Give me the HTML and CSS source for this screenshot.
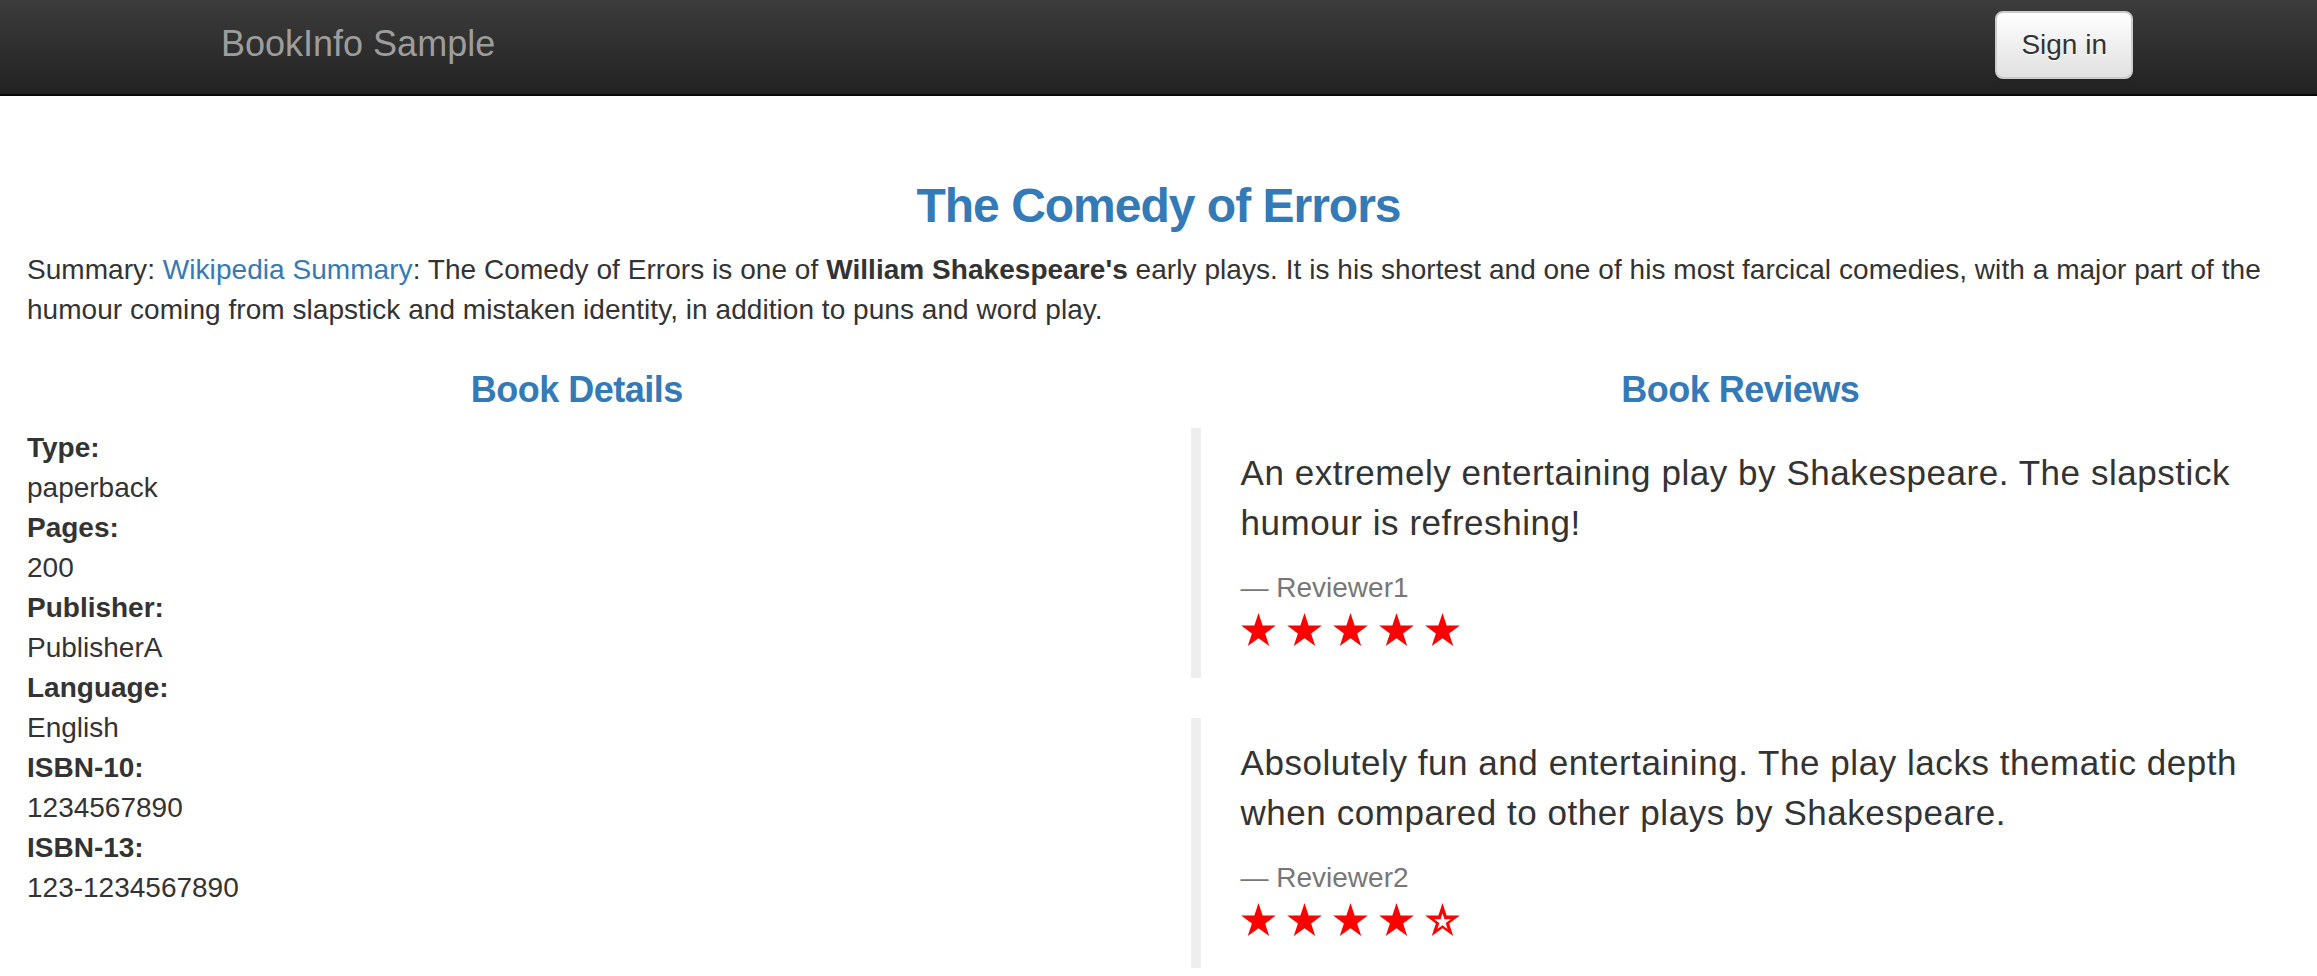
FILE: index.html
```html
<!DOCTYPE html>
<html lang="en">
<head>
<meta charset="utf-8">
<title>Simple Bookstore App</title>
<link rel="stylesheet" href="styles.css">
</head>
<body>
<nav class="navbar">
  <a class="brand" href="#">BookInfo Sample</a>
  <button class="btn-signin" type="button">Sign in</button>
</nav>

<main class="content">
  <h3 class="title">The Comedy of Errors</h3>
  <p class="summary">Summary: <a href="#">Wikipedia Summary</a>: The Comedy of Errors is one of <b>William Shakespeare's</b> early plays. It is his shortest and one of his most farcical comedies, with a major part of the humour coming from slapstick and mistaken identity, in addition to puns and word play.</p>

  <div class="columns">
    <section class="col">
      <h4 class="col-title">Book Details</h4>
      <dl class="details">
        <dt>Type:</dt><dd>paperback</dd>
        <dt>Pages:</dt><dd>200</dd>
        <dt>Publisher:</dt><dd>PublisherA</dd>
        <dt>Language:</dt><dd>English</dd>
        <dt>ISBN-10:</dt><dd>1234567890</dd>
        <dt>ISBN-13:</dt><dd>123-1234567890</dd>
      </dl>
    </section>

    <section class="col">
      <h4 class="col-title">Book Reviews</h4>
      <blockquote class="review">
        <p>An extremely entertaining play by Shakespeare. The slapstick humour is refreshing!</p>
        <small>Reviewer1</small>
        <div class="stars">
          <svg class="star" viewBox="2.45 0 95.1 90.45"><polygon points="50,0 61.23,34.55 97.55,34.55 68.16,55.9 79.39,90.45 50,69.1 20.61,90.45 31.84,55.9 2.45,34.55 38.77,34.55"/></svg>
          <svg class="star" viewBox="2.45 0 95.1 90.45"><polygon points="50,0 61.23,34.55 97.55,34.55 68.16,55.9 79.39,90.45 50,69.1 20.61,90.45 31.84,55.9 2.45,34.55 38.77,34.55"/></svg>
          <svg class="star" viewBox="2.45 0 95.1 90.45"><polygon points="50,0 61.23,34.55 97.55,34.55 68.16,55.9 79.39,90.45 50,69.1 20.61,90.45 31.84,55.9 2.45,34.55 38.77,34.55"/></svg>
          <svg class="star" viewBox="2.45 0 95.1 90.45"><polygon points="50,0 61.23,34.55 97.55,34.55 68.16,55.9 79.39,90.45 50,69.1 20.61,90.45 31.84,55.9 2.45,34.55 38.77,34.55"/></svg>
          <svg class="star" viewBox="2.45 0 95.1 90.45"><polygon points="50,0 61.23,34.55 97.55,34.55 68.16,55.9 79.39,90.45 50,69.1 20.61,90.45 31.84,55.9 2.45,34.55 38.77,34.55"/></svg>
        </div>
      </blockquote>
      <blockquote class="review">
        <p>Absolutely fun and entertaining. The play lacks thematic depth when compared to other plays by Shakespeare.</p>
        <small>Reviewer2</small>
        <div class="stars">
          <svg class="star" viewBox="2.45 0 95.1 90.45"><polygon points="50,0 61.23,34.55 97.55,34.55 68.16,55.9 79.39,90.45 50,69.1 20.61,90.45 31.84,55.9 2.45,34.55 38.77,34.55"/></svg>
          <svg class="star" viewBox="2.45 0 95.1 90.45"><polygon points="50,0 61.23,34.55 97.55,34.55 68.16,55.9 79.39,90.45 50,69.1 20.61,90.45 31.84,55.9 2.45,34.55 38.77,34.55"/></svg>
          <svg class="star" viewBox="2.45 0 95.1 90.45"><polygon points="50,0 61.23,34.55 97.55,34.55 68.16,55.9 79.39,90.45 50,69.1 20.61,90.45 31.84,55.9 2.45,34.55 38.77,34.55"/></svg>
          <svg class="star" viewBox="2.45 0 95.1 90.45"><polygon points="50,0 61.23,34.55 97.55,34.55 68.16,55.9 79.39,90.45 50,69.1 20.61,90.45 31.84,55.9 2.45,34.55 38.77,34.55"/></svg>
          <svg class="star star-empty" viewBox="2.45 0 95.1 90.45"><polygon points="50,0 61.23,34.55 97.55,34.55 68.16,55.9 79.39,90.45 50,69.1 20.61,90.45 31.84,55.9 2.45,34.55 38.77,34.55"/><polygon class="hole" transform="translate(50 52) scale(0.48) translate(-50 -50)" points="50,0 61.23,34.55 97.55,34.55 68.16,55.9 79.39,90.45 50,69.1 20.61,90.45 31.84,55.9 2.45,34.55 38.77,34.55"/></svg>
        </div>
      </blockquote>
    </section>
  </div>
</main>
</body>
</html>
```

FILE: styles.css
```css
* {
  box-sizing: border-box;
}

html, body {
  margin: 0;
  padding: 0;
  background: #fff;
}

body {
  font-family: "Liberation Sans", Arial, Helvetica, sans-serif;
  font-size: 28px;
  line-height: 40px;
  color: #333;
}

a {
  color: #337ab7;
  text-decoration: none;
}

/* Navbar */
.navbar {
  height: 96px;
  display: flex;
  justify-content: space-between;
  align-items: flex-start;
  padding: 0 184px 0 221px;
  background-image: linear-gradient(to bottom, #3c3c3c 0%, #222 100%);
  border-bottom: 2px solid #080808;
}

.brand {
  margin-top: 24px;
  font-size: 36px;
  line-height: 40px;
  color: #9d9d9d;
}

.btn-signin {
  margin-top: 11px;
  padding: 12px 24px;
  font-family: "Liberation Sans", Arial, Helvetica, sans-serif;
  font-size: 28px;
  line-height: 40px;
  color: #333;
  background-image: linear-gradient(to bottom, #fff 0%, #e0e0e0 100%);
  border: 2px solid #ccc;
  border-radius: 8px;
  box-shadow: inset 0 2px 0 rgba(255, 255, 255, .15), 0 2px 2px rgba(0, 0, 0, .075);
  text-shadow: 0 1px 0 #fff;
}

/* Content */
.content {
  padding: 0 27px;
}

.title {
  margin: 83px 0 18px;
  text-align: center;
  font-size: 48px;
  line-height: 53px;
  font-weight: bold;
  letter-spacing: -1px;
  color: #337ab7;
}

.summary {
  margin: 0 0 40px;
  letter-spacing: 0.05px;
}

.columns {
  display: grid;
  grid-template-columns: 1fr 1fr;
  column-gap: 64px;
}

.col-title {
  margin: 0 0 18px;
  text-align: center;
  font-size: 36px;
  line-height: 40px;
  font-weight: bold;
  letter-spacing: -0.5px;
  color: #337ab7;
}

.details {
  margin: 0;
}

.details dt {
  font-weight: bold;
}

.details dd {
  margin: 0;
}

/* Reviews */
.review {
  margin: 0 0 40px;
  padding: 20px 40px;
  border-left: 10px solid #eee;
}

.review p {
  margin: 0 0 20px;
  font-size: 35px;
  line-height: 50px;
  letter-spacing: 0.55px;
}

.review small {
  display: block;
  font-size: 28px;
  line-height: 40px;
  color: #777;
}

.review small::before {
  content: "\2014\00A0";
}

.stars {
  display: flex;
  gap: 11px;
  height: 50px;
  padding-top: 5px;
}

.star {
  width: 35px;
  height: 33px;
  fill: #f00;
}

.star-empty .hole {
  fill: #fff;
}
```
